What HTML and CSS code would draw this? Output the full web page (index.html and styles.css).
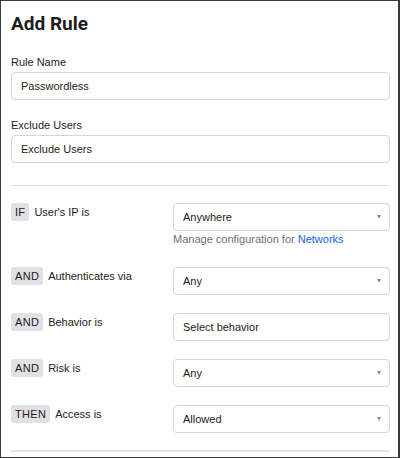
FILE: index.html
```html
<!DOCTYPE html>
<html>
<head>
<meta charset="utf-8">
<link rel="stylesheet" href="styles.css">
</head>
<body>
<div class="frame">
  <h1 class="title">Add Rule</h1>

  <div class="field">
    <div class="label">Rule Name</div>
    <div class="input">Passwordless</div>
  </div>

  <div class="field field-second">
    <div class="label">Exclude Users</div>
    <div class="input">Exclude Users</div>
  </div>

  <hr class="divider">

  <div class="rules">
    <div class="rule">
      <div class="cond"><span class="badge">IF</span><span class="cond-text">User's IP is</span></div>
      <div class="control">
        <div class="input select">Anywhere<span class="caret"></span></div>
        <div class="helper">Manage configuration for <a class="link" href="#">Networks</a></div>
      </div>
    </div>
    <div class="rule">
      <div class="cond"><span class="badge">AND</span><span class="cond-text">Authenticates via</span></div>
      <div class="control">
        <div class="input select">Any<span class="caret"></span></div>
      </div>
    </div>
    <div class="rule">
      <div class="cond"><span class="badge">AND</span><span class="cond-text">Behavior is</span></div>
      <div class="control">
        <div class="input">Select behavior</div>
      </div>
    </div>
    <div class="rule">
      <div class="cond"><span class="badge">AND</span><span class="cond-text">Risk is</span></div>
      <div class="control">
        <div class="input select">Any<span class="caret"></span></div>
      </div>
    </div>
    <div class="rule">
      <div class="cond"><span class="badge">THEN</span><span class="cond-text">Access is</span></div>
      <div class="control">
        <div class="input select">Allowed<span class="caret"></span></div>
      </div>
    </div>
  </div>

  <hr class="divider-bottom">
</div>
</body>
</html>
```

FILE: styles.css
```css
* { box-sizing: border-box; }

html, body {
  margin: 0;
  padding: 0;
  background: #ffffff;
}

body {
  font-family: "Liberation Sans", Arial, sans-serif;
  color: #1d1d21;
  font-size: 11px;
}

.frame {
  width: 400px;
  height: 458px;
  border: 1px solid #3a3a3a;
  border-right-width: 2px;
  padding: 11px 8px 0 10px;
  overflow: hidden;
}

.title {
  margin: 0;
  font-family: Roboto, "Liberation Sans", Arial, sans-serif;
  font-size: 19px;
  line-height: 24px;
  font-weight: 700;
}

.field {
  margin-top: 19px;
}

.field-second {
  margin-top: 18px;
}

.label {
  line-height: 14px;
  margin-bottom: 3px;
}

.input {
  position: relative;
  height: 28px;
  border: 1px solid #d4d4da;
  border-radius: 4px;
  padding: 0 9px;
  line-height: 26px;
  color: #1d1d21;
  background: #fff;
}

.select {
  padding-right: 24px;
}

.caret {
  position: absolute;
  right: 8px;
  top: 11px;
  width: 0;
  height: 0;
  border-left: 2.5px solid transparent;
  border-right: 2.5px solid transparent;
  border-top: 4px solid #8c8c96;
}

.divider {
  margin: 22px 1px 17px 0;
  border: 0;
  border-top: 1px solid #d9d9de;
  height: 0;
}

.rules {
  display: flex;
  flex-direction: column;
  gap: 18px;
}

.rule {
  display: flex;
  align-items: flex-start;
}

.cond {
  width: 162px;
  flex: none;
  display: flex;
  align-items: center;
}

.badge {
  display: inline-block;
  height: 18px;
  line-height: 18px;
  padding: 0 4px;
  background: #e1e1e5;
  border-radius: 3px;
  color: #1d1d21;
  letter-spacing: 0.3px;
}

.cond-text {
  margin-left: 5px;
  line-height: 18px;
}

.control {
  flex: 1;
}

.helper {
  margin-top: 1px;
  margin-bottom: 3px;
  line-height: 14px;
  color: #6e6e78;
}

.link {
  color: #1662dd;
  text-decoration: none;
}

.divider-bottom {
  margin: 17px 1px 0 0;
  border: 0;
  height: 2px;
  background: #e2e2e4;
}
```
